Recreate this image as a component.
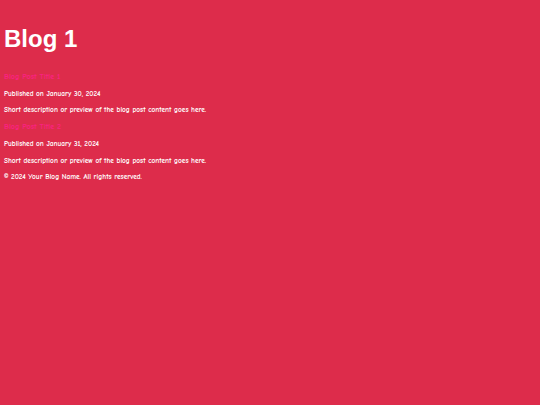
const posts = [
  { title: "Blog Post Title 1", date: "January 30, 2024" },
  { title: "Blog Post Title 2", date: "January 31, 2024" },
];

const casual = { fontFamily: '"Comic Sans MS", "Comic Neue", "Liberation Sans", sans-serif' };

export default function App() {
  return (
    <div className="min-h-screen w-full bg-[#dd2c4b] px-[4px] pt-[27px] text-white" style={casual}>
      <h1 className="text-[24px] leading-[24px] font-bold" style={{ fontFamily: '"Liberation Sans", Arial, sans-serif' }}>
        Blog 1
      </h1>
      <main className="mt-[18px] text-[7.3px] font-bold">
        {posts.map((p) => (
          <article key={p.title}>
            <h2 className="leading-[16.7px] text-[8px] text-[#fa2282]">{p.title}</h2>
            <p className="leading-[16.7px]">Published on {p.date}</p>
            <p className="leading-[16.7px]">Short description or preview of the blog post content goes here.</p>
          </article>
        ))}
        <footer className="leading-[16.7px]">© 2024 Your Blog Name. All rights reserved.</footer>
      </main>
    </div>
  );
}
